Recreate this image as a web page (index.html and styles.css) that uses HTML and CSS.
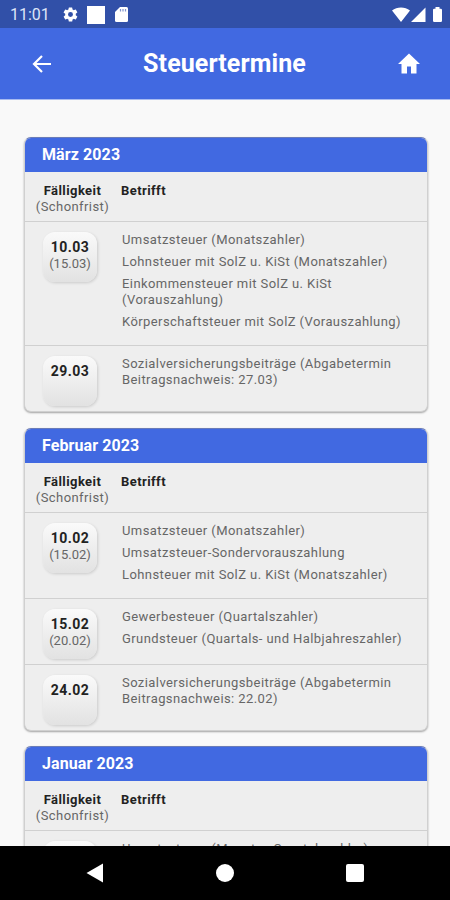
FILE: index.html
```html
<!DOCTYPE html>
<html lang="de">
  <head>
    <meta charset="UTF-8" />
    <meta name="viewport" content="width=device-width, initial-scale=1.0" />
    <title>Steuertermine</title>
    <link rel="stylesheet" href="styles.css">
  </head>
  <body>
    <div class="status-bar">
      <span class="clock">11:01</span>
      <svg class="gear" width="17" height="17" viewBox="0 0 24 24">
        <path fill="currentColor" fill-rule="evenodd" d="M19.4 13a7.500 7.500 0 0 0 0-2l2.100-1.650a.5.5 0 0 0 .12-.64l-2-3.460a.5.5 0 0 0-.6-.22l-2.500 1a7.300 7.300 0 0 0-1.700-.98l-.38-2.650A.5.5 0 0 0 14 2h-4a.5.5 0 0 0-.49.42l-.38 2.650a7.300 7.300 0 0 0-1.690.98l-2.490-1a.5.5 0 0 0-.6.22l-2 3.460a.5.5 0 0 0 .12.64L4.570 11a7.500 7.500 0 0 0 0 2l-2.100 1.650a.5.5 0 0 0-.12.64l2 3.460c.12.22.38.300.6.22l2.490-1c.52.400 1.080.73 1.690.98l.38 2.650c.03.240.24.42.49.42h4c.25 0 .46-.18.49-.42l.38-2.650a7.300 7.300 0 0 0 1.690-.98l2.490 1c.22.08.48 0 .6-.22l2-3.460a.5.5 0 0 0-.12-.64zM12 15.500a3.500 3.500 0 1 1 0-7 3.500 3.500 0 0 1 0 7z" />
      </svg>
      <span class="square"></span>
      <svg class="sd-card" width="13" height="15" viewBox="0 0 13 15">
        <path fill="currentColor" d="M5 0h6.500A1.500 1.500 0 0 1 13 1.500v12a1.500 1.500 0 0 1-1.500 1.500h-10A1.500 1.500 0 0 1 0 13.500V5z" />
        <path stroke="#8194cc" stroke-width="1.200" d="M5.500 2v2.400M8 2v2.400M10.500 2v2.400" />
      </svg>
      <svg class="signals" width="53" height="16" viewBox="0 0 53 16">
        <path fill="currentColor" d="M0 3.500C5 -.5 13 -.5 18 3.500L9 15zM19 15L33.500 .5V15zM41 3q0-1.200 1.200-1.200H43.500V0h4v1.800h1.300Q50 1.800 50 3v10.800q0 1.200-1.200 1.200h-6.600Q41 15 41 13.800z" />
      </svg>
    </div>

    <header class="app-bar">
      <svg width="20" height="18" viewBox="0 0 20 18">
        <path fill="none" stroke="currentColor" stroke-width="2.200" d="M19 9H2M10 1L2 9l8 8" />
      </svg>
      <h1>Steuertermine</h1>
      <svg width="24" height="21" viewBox="0 0 24 21">
        <path fill="currentColor" d="M10 20.500v-7h4v7h5.500v-9.500H23L12 .5 1 11h3.500v9.500z" />
      </svg>
    </header>

    <main class="content">
      <section class="card">
        <h2>März 2023</h2>
        <div class="row head">
          <div class="due"><b>Fälligkeit</b><span>(Schonfrist)</span></div>
          <b>Betrifft</b>
        </div>
        <div class="row">
          <div class="date"><b>10.03</b><span>(15.03)</span></div>
          <ul>
            <li>Umsatzsteuer (Monatszahler)</li>
            <li>Lohnsteuer mit SolZ u. KiSt (Monatszahler)</li>
            <li>Einkommensteuer mit SolZ u. KiSt (Vorauszahlung)</li>
            <li>Körperschaftsteuer mit SolZ (Vorauszahlung)</li>
          </ul>
        </div>
        <div class="row">
          <div class="date"><b>29.03</b></div>
          <ul>
            <li>Sozialversicherungsbeiträge (Abgabetermin Beitragsnachweis: 27.03)</li>
          </ul>
        </div>
      </section>

      <section class="card">
        <h2>Februar 2023</h2>
        <div class="row head">
          <div class="due"><b>Fälligkeit</b><span>(Schonfrist)</span></div>
          <b>Betrifft</b>
        </div>
        <div class="row">
          <div class="date"><b>10.02</b><span>(15.02)</span></div>
          <ul>
            <li>Umsatzsteuer (Monatszahler)</li>
            <li>Umsatzsteuer-Sondervorauszahlung</li>
            <li>Lohnsteuer mit SolZ u. KiSt (Monatszahler)</li>
          </ul>
        </div>
        <div class="row">
          <div class="date"><b>15.02</b><span>(20.02)</span></div>
          <ul>
            <li>Gewerbesteuer (Quartalszahler)</li>
            <li>Grundsteuer (Quartals- und Halbjahreszahler)</li>
          </ul>
        </div>
        <div class="row">
          <div class="date"><b>24.02</b></div>
          <ul>
            <li>Sozialversicherungsbeiträge (Abgabetermin Beitragsnachweis: 22.02)</li>
          </ul>
        </div>
      </section>

      <section class="card">
        <h2>Januar 2023</h2>
        <div class="row head">
          <div class="due"><b>Fälligkeit</b><span>(Schonfrist)</span></div>
          <b>Betrifft</b>
        </div>
        <div class="row">
          <div class="date"></div>
          <ul>
            <li>Umsatzsteuer (Monats-, Quartalszahler)</li>
          </ul>
        </div>
      </section>
    </main>

    <nav class="nav-bar">
      <svg width="18" height="20" viewBox="0 0 18 20">
        <path fill="currentColor" d="M17 .5v19L.5 10z" />
      </svg>
      <span class="nav-home"></span>
      <span class="nav-recent"></span>
    </nav>
  </body>
</html>
```

FILE: styles.css
```css
* {
  box-sizing: border-box;
}

body {
  margin: 0;
  height: 900px;
  display: flex;
  flex-direction: column;
  overflow: hidden;
  font-family: Roboto, sans-serif;
  font-size: 13px;
  line-height: 16px;
  letter-spacing: 0.42px;
  color: #666;
  background-color: #f9f9f9;
}

.status-bar {
  flex: none;
  height: 28px;
  display: flex;
  align-items: center;
  padding: 1px 5px 0 10px;
  color: #fff;
  background-color: #3150a8;
}

.clock {
  width: 52px;
  font-size: 16px;
  letter-spacing: 0;
  color: #dde4f8;
}

.square {
  width: 18px;
  height: 18px;
  margin: 0 10px 0 8px;
  background-color: #fff;
}

.signals {
  margin-left: auto;
}

.app-bar {
  flex: none;
  height: 72px;
  display: flex;
  align-items: center;
  justify-content: space-between;
  padding: 0 29px 0 32px;
  color: #fff;
  background-color: #4169e1;
  border-bottom: 1px solid #a9bbf0;
}

.app-bar h1 {
  margin: 0;
  font-size: 25px;
  line-height: 28px;
  font-weight: 700;
  letter-spacing: 0.1px;
}

.content {
  flex: 1;
  min-height: 0;
  overflow: hidden;
  padding: 37px 22px 0 24px;
}

.card {
  margin-bottom: 15.4px;
  border: 1px solid #d0d0d0;
  border-top-color: #6a7cb8;
  border-radius: 7px;
  overflow: hidden;
  background-color: #eee;
  box-shadow: 0 1px 2px rgba(0, 0, 0, 0.35);
}

.card h2 {
  margin: 0;
  height: 34px;
  padding: 0 17px;
  font-size: 16px;
  line-height: 33px;
  font-weight: 700;
  letter-spacing: 0.1px;
  color: #fff;
  background-color: #4169e1;
}

.row {
  display: flex;
  min-height: 66px;
  padding: 10px 18px 5px;
  border-top: 1px solid #d0d0d0;
}

.row.head {
  min-height: 49px;
  padding: 11px 11px 0;
  border-top: none;
}

.row b {
  font-weight: 700;
  color: #222;
}

.due {
  width: 73px;
  margin-right: 12px;
  display: flex;
  flex-direction: column;
  align-items: center;
}

.date {
  flex: none;
  width: 54px;
  height: 50px;
  margin-right: 25px;
  padding-top: 6px;
  display: flex;
  flex-direction: column;
  align-items: center;
  letter-spacing: 0;
  border-radius: 12px;
  background: linear-gradient(#fafafa, #e2e2e2);
  box-shadow: 1px 1px 3px rgba(0, 0, 0, 0.15);
}

.date b {
  font-size: 14px;
  line-height: 18px;
  letter-spacing: 0.5px;
}

.row ul {
  flex: 1;
  margin: 0;
  padding: 0 0 4.2px;
  list-style: none;
}

.row li {
  margin-bottom: 6px;
}

.nav-bar {
  flex: none;
  height: 54px;
  display: flex;
  align-items: center;
  justify-content: space-between;
  padding: 0 86px;
  color: #fff;
  background-color: #000;
}

.nav-home {
  width: 18px;
  height: 18px;
  border-radius: 50%;
  background-color: #fff;
}

.nav-recent {
  width: 18px;
  height: 18px;
  border-radius: 2px;
  background-color: #fff;
}
```
